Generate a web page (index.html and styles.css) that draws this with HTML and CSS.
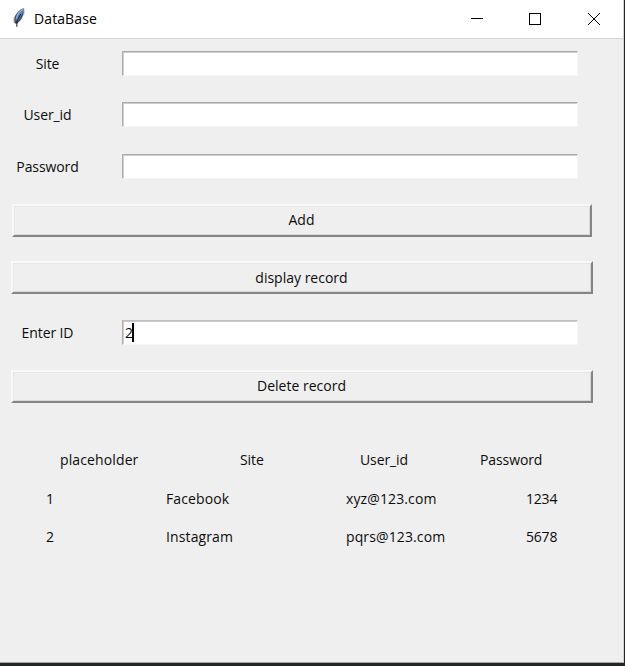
FILE: index.html
```html
<!DOCTYPE html>
<html lang="en">
<head>
<meta charset="utf-8">
<title>DataBase</title>
<link rel="stylesheet" href="styles.css">
</head>
<body>
<main class="window">
  <header class="titlebar">
    <svg class="feather" width="14" height="20" viewBox="0 0 14 20">
      <path d="M11.8 0.3C7.5 1.5 3.2 6 2 11L2.4 15L4.4 16C8.2 13.5 11.4 9 12 4Z" fill="#46505c"/>
      <path d="M11 1.2C7 3 4 7 3.2 12L5.4 13C8.6 10 10.4 6 11.2 3Z" fill="#4d88c4"/>
      <path d="M11 1.6C7.5 3.5 5 7 4.4 10.5" fill="none" stroke="#8fb8e0" stroke-width="1.1"/>
      <path d="M8.8 6L5 13L4.8 18.8" fill="none" stroke="#1b1b1b" stroke-width="1"/>
      <path d="M2 9V14.5M12 1V6" fill="none" stroke="#b5aa9b" stroke-width="0.9"/>
    </svg>
    <h1 class="title">DataBase</h1>
    <svg class="controls" width="130" height="14" viewBox="0 0 130 14" fill="none" stroke="#000" shape-rendering="crispEdges">
      <path d="M0 7.5H12"/>
      <rect x="58.5" y="2.5" width="11" height="11"/>
      <path d="M117 2L129 14M129 2L117 14" shape-rendering="auto" stroke-width="1"/>
    </svg>
  </header>
  <section class="form">
    <div class="field"><label class="label site">Site</label><div class="entry"></div></div>
    <div class="field"><label class="label">User_id</label><div class="entry"></div></div>
    <div class="field"><label class="label">Password</label><div class="entry"></div></div>
    <button class="button add">Add</button>
    <button class="button display">display record</button>
    <div class="field id-field"><label class="label">Enter ID</label><div class="entry active">2<i class="caret"></i></div></div>
    <button class="button delete">Delete record</button>
  </section>
  <section class="records">
    <div class="row head"><span class="wide">placeholder</span><span>Site</span><span>User_id</span><span>Password</span></div>
    <div class="row"><span>1</span><span class="wide">Facebook</span><span class="wide">xyz@123.com</span><span class="number">1234</span></div>
    <div class="row"><span>2</span><span class="wide">Instagram</span><span class="wide">pqrs@123.com</span><span class="number">5678</span></div>
  </section>
</main>
</body>
</html>
```
FILE: styles.css
```css
* { box-sizing: border-box; }
body {
  margin: 0;
  height: 666px;
  overflow: hidden;
  background: #222624;
  color: #0c0c0c;
  font: 14px/20px "Open Sans", "Noto Sans", sans-serif;
  letter-spacing: -0.1px;
}
.window {
  width: 624px;
  height: 663px;
  background: #efefef;
  border-right: 1px solid #d2d2d2;
  border-bottom: 1px solid #a3a5a4;
}
.titlebar {
  display: flex;
  align-items: center;
  height: 39px;
  padding: 0 22px 2px 12px;
  background: #fff;
  border-bottom: 1px solid #d5d5d5;
}
.title {
  margin: 1px auto 0 8px;
  color: #000;
  font-size: 14px;
  font-weight: 400;
  letter-spacing: 0.1px;
}
.form {
  display: flex;
  flex-direction: column;
  padding: 12px 0 0 11px;
}
.field {
  display: flex;
  align-items: center;
  height: 25px;
  margin-bottom: 26px;
}
.field + .field { margin-bottom: 27px; }
.field + .field + .field { margin-bottom: 25px; }
.label {
  width: 73px;
  margin-right: 38px;
  text-align: center;
}
.entry {
  display: flex;
  align-items: center;
  width: 456px;
  height: 25px;
  padding-left: 2px;
  background: #fff;
  border: 1px solid #f5f5f5;
  border-top-color: #a8a8a8;
  border-left-color: #adadad;
  box-shadow: inset 1px 1px #cecece;
}
.active { border-top-color: #bebebe; }
.caret {
  width: 2px;
  height: 19px;
  margin-left: -1px;
  background: #000;
}
.button {
  width: 582px;
  height: 33px;
  padding: 0 1px 1px 0;
  color: inherit;
  font: inherit;
  letter-spacing: 0;
  background: #efefef;
  border: 2px solid;
  border-color: #f8f8f8 #858585 #858585 #f8f8f8;
  box-shadow: inset 1px 1px #e6e6e6, inset -1px -1px #d8d8d8;
}
.add { width: 580px; margin: 0 0 24px 1px; }
.display { padding-bottom: 0; margin-bottom: 26px; }
.field.id-field { margin-bottom: 25px; }
.records { padding-top: 47px; }
.row {
  display: grid;
  grid-template-columns: 120px 180px 180px 1fr;
  height: 38px;
  padding-left: 46px;
}
.head {
  grid-template-columns: 180px 120px 120px 1fr;
  height: 39px;
  padding-left: 60px;
}
.wide { letter-spacing: 0.12px; }
.number { letter-spacing: -0.2px; }
```
